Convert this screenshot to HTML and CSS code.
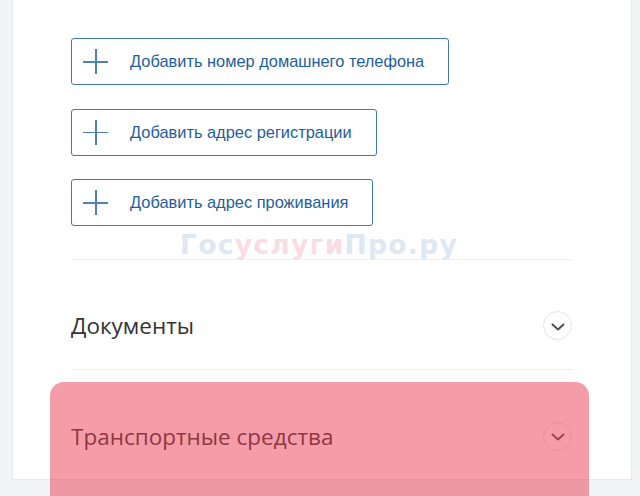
FILE: index.html
```html
<!DOCTYPE html>
<html lang="ru">
<head>
<meta charset="utf-8">
<link rel="stylesheet" href="styles.css">
</head>
<body>
<div class="page">
  <div class="card">
    <div class="actions">
      <button class="add-btn"><span class="plus"></span><span class="label">Добавить номер домашнего телефона</span></button>
      <button class="add-btn"><span class="plus"></span><span class="label">Добавить адрес регистрации</span></button>
      <button class="add-btn"><span class="plus"></span><span class="label">Добавить адрес проживания</span></button>
    </div>
    <div class="section">
      <span class="section-title">Документы</span>
      <span class="toggle"><svg width="14" height="8" viewBox="0 0 14 8"><path d="M1.5 1.5 L7 6.5 L12.5 1.5" fill="none" stroke="#4a4f56" stroke-width="2" stroke-linecap="round" stroke-linejoin="round"/></svg></span>
    </div>
    <div class="section">
      <span class="section-title">Транспортные средства</span>
      <span class="toggle"><svg width="14" height="8" viewBox="0 0 14 8"><path d="M1.5 1.5 L7 6.5 L12.5 1.5" fill="none" stroke="#4a4f56" stroke-width="2" stroke-linecap="round" stroke-linejoin="round"/></svg></span>
    </div>
  </div>
  <div class="watermark"><span class="wm-blue">Гос</span><span class="wm-pink">услуги</span><span class="wm-blue">Про.ру</span></div>
  <div class="highlight"></div>
</div>
</body>
</html>
```
FILE: styles.css
```css
* { box-sizing: border-box; }
html, body {
  margin: 0;
  padding: 0;
  background: #f3f4f5;
  width: 640px;
  height: 496px;
  overflow: hidden;
}
.page {
  position: relative;
  width: 640px;
  height: 496px;
  padding: 0 8px 0 12px;
}
.card {
  background: #fff;
  border: 1px solid #e6e8ea;
  border-top: none;
  height: 480px;
  padding: 38px 58px 0 58px;
}
.actions {
  display: flex;
  flex-direction: column;
  align-items: flex-start;
  gap: 23.5px;
  padding-bottom: 33px;
  border-bottom: 1px solid #eef0f2;
}
.add-btn {
  display: flex;
  align-items: center;
  height: 47px;
  margin: 0;
  padding: 0 24px 0 11px;
  background: #fff;
  border: 1px solid #3f79ae;
  border-radius: 3px;
  font-family: "Liberation Sans", Arial, sans-serif;
  font-size: 16.4px;
  color: #1f5e9c;
  cursor: pointer;
}
.plus {
  position: relative;
  width: 25px;
  height: 25px;
  margin-right: 22px;
  flex: none;
}
.plus::before, .plus::after {
  content: "";
  position: absolute;
  background: #4f82b3;
}
.plus::before { left: 0; right: 0; top: 12px; height: 1.5px; }
.plus::after { top: 0; bottom: 0; left: 12px; width: 1.5px; }
.section {
  display: flex;
  align-items: center;
  justify-content: space-between;
  height: 110px;
  padding-top: 22px;
  border-bottom: 1px solid #eef0f2;
}
.section:last-child { border-bottom: none; }
.section-title {
  font-family: "Open Sans", sans-serif;
  font-size: 22.5px;
  color: #333;
}
.toggle {
  display: flex;
  align-items: center;
  justify-content: center;
  width: 29px;
  height: 29px;
  border: 1px solid #e2e4e6;
  border-radius: 50%;
  margin-right: 1px;
  padding-top: 2px;
}
.watermark {
  position: absolute;
  left: 180px;
  top: 228px;
  font-family: "DejaVu Sans", sans-serif;
  font-weight: bold;
  font-size: 26.5px;
  letter-spacing: 1.3px;
  line-height: 34px;
}
.wm-blue { color: #dde8f4; }
.wm-pink { color: #f7dde4; }
.highlight {
  position: absolute;
  left: 50px;
  top: 382px;
  width: 539px;
  height: 130px;
  border-radius: 14px;
  background: rgba(234, 60, 84, 0.5);
}
```
